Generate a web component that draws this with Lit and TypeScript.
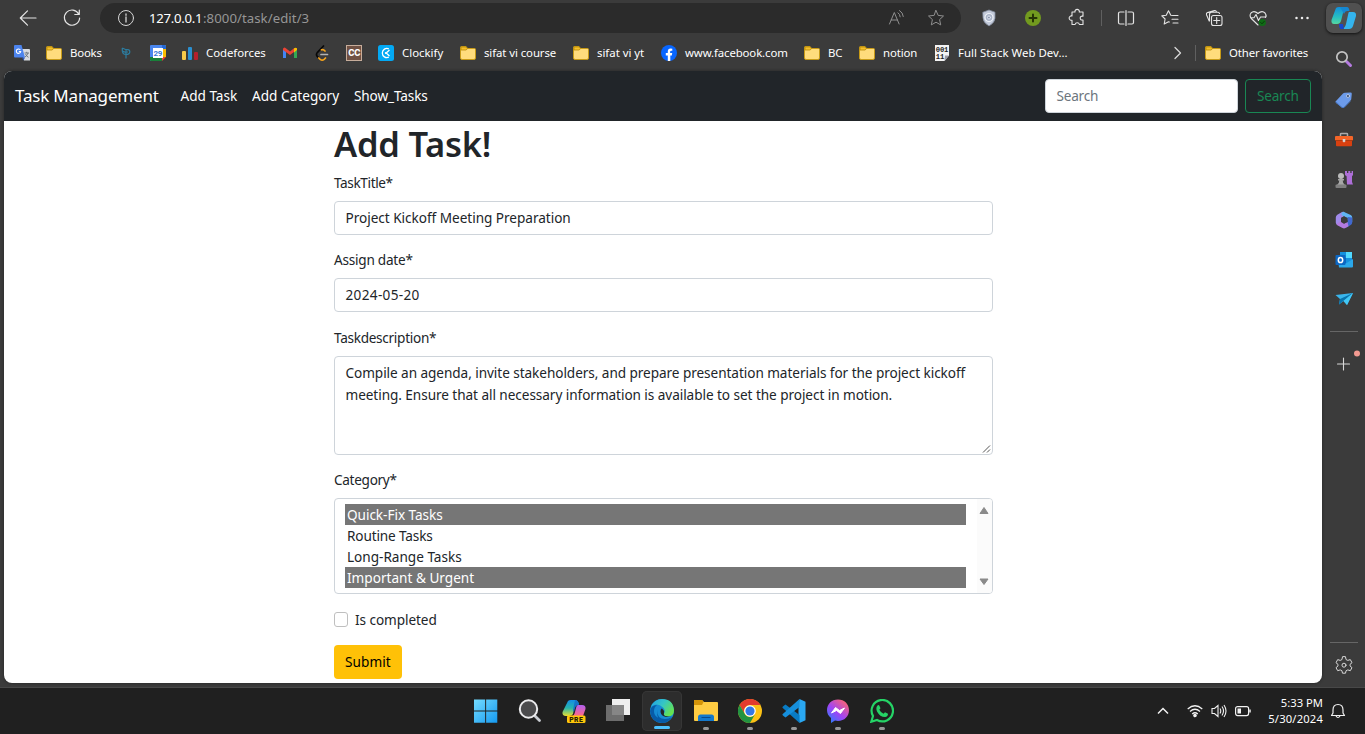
import { LitElement, html, svg, css, nothing } from "lit";
import { customElement, property } from "lit/decorators.js";

/** A single line of text whose tracking is adjusted so it spans `w` pixels. */
@customElement("fit-text")
class FitText extends LitElement {
  @property({ type: Number }) w = 0;
  @property() text = "";
  static styles = css`
    :host { display: inline-block; white-space: pre; }
    .run { display: inline-block; white-space: pre; }
  `;
  render() {
    return html`<span class="run">${this.text}</span>`;
  }
  firstUpdated() {
    const run = this.renderRoot.querySelector(".run") as HTMLElement;
    const natural = run.getBoundingClientRect().width;
    run.style.letterSpacing = `${(this.w - 0.8 - natural) / this.text.length}px`;
    this.style.width = `${this.w}px`;
  }
}

const t = (text: string, w: number) => html`<fit-text .text=${text} .w=${w}></fit-text>`;

const folder = svg`<path d="M.5 2.5a1 1 0 0 1 1-1H6l1.6 2H14.500a1 1 0 0 1 1 1V13a1.500 1.500 0 0 1-1.500 1.500H2A1.500 1.500 0 0 1 .5 13z" fill="#ffdc7c" stroke="#c79a16"/><path d="M1 5V2h5l1.500 1.800L6 5z" fill="#f5c02c" stroke="#b98a08" stroke-width=".8"/>`;

/* 16px bookmark glyphs */
const marks: Record<string, unknown> = {
  folder,
  translate: svg`<path d="M7 4h8a1 1 0 0 1 1 1v10.500h-6z" fill="#d7dbe0"/><path d="M1 0h6.500l3.500 12.500H1a1 1 0 0 1-1-1V1a1 1 0 0 1 1-1z" fill="#4c84ee"/><path d="M8 12.500h3L9.500 15.500z" fill="#2e59b8"/><path d="M6.400 5A2.200 2.200 0 1 0 6.700 6.500H4.800" fill="none" stroke="#fff" stroke-width="1.100"/><path d="M10.500 8h4.500M12.700 6.800V8M14 8q-1 3-3 4M11.500 9q1 2.500 3 3.300" stroke="#68737c" stroke-width=".9" fill="none"/>`,
  pin: svg`<g fill="none" stroke="#2c7da0" stroke-width="1.200"><path d="M4.300 3 8 4.700q3.800-.7 3.800 2T8 9.500V13.500M4.300 3v3L8 7.500M4.500 6q0 3.500 3.500 3.500M8 4.700v5M8 7h2"/></g>`,
  calendar: svg`<path d="M0 1a1 1 0 0 1 1-1h11v4H4v12H1a1 1 0 0 1-1-1z" fill="#4a86ee"/><path d="M12 0h3a1 1 0 0 1 1 1v11h-4z" fill="#fbbc04"/><path d="M12 0h3a1 1 0 0 1 1 1v3h-4z" fill="#2368d6"/><path d="M0 12h12v4H1a1 1 0 0 1-1-1z" fill="#188038"/><path d="M12 12h4l-4 4z" fill="#ea4335"/><path d="M3 3h10v10H3z" fill="#fff"/><text x="7.800" y="11" text-anchor="middle" font-size="8" font-weight="700" fill="#3b78d8" font-family="Roboto, sans-serif" letter-spacing="-.3">29</text>`,
  bars: svg`<rect x="0" y="6" width="4" height="9" rx="1" fill="#f7c948"/><rect x="6" y="2" width="4" height="13" rx="1" fill="#2a8fd0"/><rect x="12" y="7" width="4" height="8" rx="1" fill="#b51f2c"/>`,
  gmail: svg`<path d="M1 4v9h3V6z" fill="#4285f4"/><path d="M12 6v7h3V4z" fill="#34a853"/><path d="M1 4a1.500 1.500 0 0 1 2.500-1L8 6.500 12 3.300V7L8 10 1 5z" fill="#ea4335"/><path d="M12 3.300q1.500-1.300 3 0V5l-3 2.500z" fill="#fbbc04"/>`,
  leet: svg`<g fill="none" stroke-linecap="round" stroke-width="1.700"><path d="M9.500 1 3.500 7.300q-2 2.200 0 4.400l1 1" stroke="#080808"/><path d="m4.800 13 1.400 1.400q2 1.400 4 0l1.300-1.400M7.500 4.800q2-.6 3.500 1.200" stroke="#f5a31b"/><path d="M7 9.500h6.500" stroke="#b3b3b3"/></g>`,
  cc: svg`<rect x=".5" y=".5" width="15" height="15" fill="#705143" stroke="#c7ad9b"/><text x="8.200" y="11" text-anchor="middle" font-size="8.500" font-weight="800" fill="#fff" font-family="Inter, sans-serif" letter-spacing="-.4">CC</text>`,
  clock: svg`<rect width="16" height="16" rx="2.500" fill="#03a9f4"/><path d="M10.800 3.800A4.600 4.600 0 1 0 10.800 12.200M11.500 5 8.200 8l3.300 3" fill="none" stroke="#fff" stroke-width="1.300"/><circle cx="7.800" cy="8" r="1" fill="#fff"/>`,
  facebook: svg`<circle cx="8" cy="8" r="8" fill="#0866ff"/><path d="M6.800 16V10.500H4.800V8h2V6.500q0-3 2.800-3 1 0 1.700.2v2.100h-1.200q-1 0-1 1.100V8h2.100l-.4 2.500H9.300V16z" fill="#fff"/>`,
  binary: svg`<path d="M1 0h14v10.500L10.500 16H1z" fill="#f3f3f3"/><path d="M15 10.500h-4l-.5 5.500z" fill="#9c9ca6"/><g fill="#222" font-family="Liberation Mono, monospace" font-size="7.200" font-weight="700"><text x="1.800" y="6.800" letter-spacing="-.2">001</text><text x="1.800" y="13.800" letter-spacing="-.2">11</text></g>`,
};

interface Mark { icon: string; label?: string; tw?: number; w: number }
const bookmarks: Mark[] = [
  { icon: "translate", w: 32 },
  { icon: "folder", label: "Books", tw: 32.5, w: 72 },
  { icon: "pin", w: 32 },
  { icon: "calendar", w: 32 },
  { icon: "bars", label: "Codeforces", tw: 60.5, w: 100 },
  { icon: "gmail", w: 32 },
  { icon: "leet", w: 32 },
  { icon: "cc", w: 32 },
  { icon: "clock", label: "Clockify", tw: 42, w: 82 },
  { icon: "folder", label: "sifat vi course", tw: 73, w: 113 },
  { icon: "folder", label: "sifat vi yt", tw: 48, w: 88 },
  { icon: "facebook", label: "www.facebook.com", tw: 103.5, w: 143 },
  { icon: "folder", label: "BC", tw: 15, w: 55 },
  { icon: "folder", label: "notion", tw: 35, w: 75 },
  { icon: "binary", label: "Full Stack Web Dev...", tw: 110.5, w: 140.5 },
];

/* 20px toolbar glyphs drawn around their centre */
const tools: Record<string, unknown> = {
  back: svg`<path d="M18 10H2.500M9.500 2.800 2.300 10l7.200 7.200" stroke="#e4e4e4" stroke-width="1.200"/>`,
  reload: svg`<path d="M16.800 6.200A7.600 7.600 0 1 0 17.600 10M17.300 2v4.500h-4.500" stroke="#e4e4e4" stroke-width="1.200"/>`,
  info: svg`<circle cx="10" cy="10" r="7.500" stroke="#d6d6d6"/><path d="M10 8.800V14M10 6v1.300" stroke="#d6d6d6" stroke-width="1.300"/>`,
  read: svg`<path d="M3.500 16 8.300 4.500 13.100 16M5.200 12h6.200M12 4.800q2 1.300 2.200 4M13.500 2.500q3.500 2 3.800 6" stroke="#8f8f8f"/>`,
  star: svg`<path d="m10 2.500 2.200 4.900 5.300.6-3.900 3.600 1.100 5.300L10 14.200l-4.700 2.700 1.100-5.300L2.500 8l5.300-.6z" stroke="#8f8f8f"/>`,
  shield: svg`<path d="M4 4.200 10 2l6 2.200v6Q16 14.500 10 18 4 14.500 4 10.200z" fill="#c3cada" stroke="#828b9d" stroke-width=".8"/><circle cx="10" cy="9.500" r="4" fill="#a9b3c8" stroke="#eef2f8" stroke-width="1.200"/><circle cx="10" cy="9.500" r="1.500" stroke="#dfe5ef" fill="#8793ad"/>`,
  add: svg`<circle cx="10" cy="10" r="8" fill="#729a1f"/><path d="M10 6.500v7M6.500 10h7" stroke="#263305" stroke-width="2"/>`,
  puzzle: svg`<path d="M5 4h3a2.200 2.200 0 1 1 4.300 0h3.700v4.200q-2.800-.4-2.800 1.900t2.800 1.900V16.500h-3.600a2.200 2.200 0 0 0-4.300 0H5V12.200a2.200 2.200 0 1 1 0-4.200z" stroke="#e4e4e4" stroke-width="1.100"/>`,
  split: svg`<path d="M8 4H4a1.500 1.500 0 0 0-1.500 1.500v9A1.500 1.500 0 0 0 4 16h4M12 4h4a1.500 1.500 0 0 1 1.500 1.500v9A1.500 1.500 0 0 1 16 16h-4M10 2.500v15" stroke="#e4e4e4" stroke-width="1.200"/>`,
  favs: svg`<path d="M13 7.500 10.800 7.200 8.500 2.700 6.200 7.300l-4.400.6 3.300 3.100-.9 5 4.300-2.300.8.400M13.500 7.500H18M12 11.200h6M13 15h5" stroke="#e4e4e4" stroke-width="1.100"/>`,
  collect: svg`<rect x="7.500" y="7.500" width="10.500" height="10" rx="2" stroke="#e4e4e4" stroke-width="1.100"/><path d="M12.700 9.500v6M9.700 12.500h6M5.200 13 2.500 6.800q-.5-1.700 1-2.200l7-2q1.500-.3 2 1.200M15.500 5.500q-.3-1.200-1.500-1.200H7.500Q5.500 4.300 5.500 6.500v6.500" stroke="#e4e4e4" stroke-width="1.100"/>`,
  heart: svg`<path d="M10 17 3.300 10.500Q1 7.500 3 5q3-3 7 .5 4-3.500 7-.5 2 2.500.5 4.500M2.500 9.800H6L8 6.500l2.500 6L12.500 9h4.300" stroke="#e4e4e4" stroke-width="1.100"/><circle cx="14.300" cy="14.500" r="3.600" fill="#0f6b15"/><path d="m12.700 14.500 1.300 1.300 2.200-2.400" stroke="#073a09"/>`,
  dots: svg`<g fill="#ededed"><circle cx="4.500" cy="10" r="1.250"/><circle cx="10" cy="10" r="1.250"/><circle cx="15.500" cy="10" r="1.250"/></g>`,
};

/* 20px sidebar glyphs */
const side: Record<string, unknown> = {
  search: svg`<path d="m12.500 12.500 4 4" stroke="#b57be0" stroke-width="3" stroke-linecap="round"/><circle cx="8" cy="8" r="5.200" stroke="#c4c4c4" stroke-width="1.700"/>`,
  tag: svg`<path d="m2 11 7-7.500q.7-.7 2-.8l5.500-.2q1.300 0 1.300 1.300l-.5 5q0 1-.8 1.700L10 17.500q-1 .8-2 0L2 13q-1-1 0-2z" fill="#6c9bea"/><path d="m2 12 6 5.500 2 0 6-6" stroke="#4678c8"/><circle cx="14" cy="6" r="1.500" fill="#263c61" stroke="#d8e2f5" stroke-width=".7"/>`,
  tools: svg`<path d="M6.500 6V4.200q0-.7.8-.7h5.400q.8 0 .8.700V6" stroke="#aaa" stroke-width="1.500"/><path d="M2 6h16q1 0 1 1v3H1V7q0-1 1-1z" fill="#f46528"/><path d="M2 10.500h16V15.500q0 .8-1 .8H3q-1 0-1-.8z" fill="#d84010"/><path d="M1.500 10.500h17" stroke="#b53a0e" stroke-width=".8"/><path d="M8.700 9h2.600v2.500l-1.300 1-1.300-1z" fill="#d5d5d5"/>`,
  chess: svg`<path d="M11 1h2v2h1.300V1h2v2h1.300V1h1.400v4L18 6.300V12l1 2.500H13L12.600 6.300 11 5z" fill="#ae6fd8"/><circle cx="7" cy="6" r="3" fill="#bbb"/><path d="M4 9h6v1.500H8.700q0 3 2.300 4.500H3q2.300-1.500 2.300-4.500H4z" fill="#a7a7a7"/><rect x="1.500" y="14.500" width="11" height="3.500" rx="1" fill="#7f7f7f"/>`,
  office: svg`<path d="M8 2 3.300 4.700Q1.800 5.600 1.800 7.500v5.300Q2 14.300 3.300 15L7 13V8l6-3.300-3.500-3Q8.700 1.600 8 2z" fill="#a08aea"/><path d="M9.500 1.700 16.700 5Q18.200 5.900 18.200 7.500V12l-4.700-2V8.200L7.500 5V3z" fill="#5fb4f4"/><path d="M18.200 7.500v5q0 1.600-1.500 2.500L12.500 17.500 10 14l3.500-2V7z" fill="#4168cf"/><path d="m2.500 14 4.500-3 3 2.500 3.500-1.500 1 4.200-3 1.800q-1.500.9-3 0L3.300 15.200z" fill="#b27be0"/><path d="m7 8 3-1.800L13.500 8v4L10 13.700 7 12z" fill="#3b3b3b"/>`,
  outlook: svg`<path d="M6 2h12v13H6z" fill="#1490df"/><path d="M12 2h6v6h-6z" fill="#50d9ff"/><path d="M6 8h6v5H6z" fill="#0a67b9"/><path d="m4 10 7 4 8-5v7.500q0 1-1 1H5z" fill="#2ba8eb"/><rect x="1.500" y="5" width="10" height="10" rx="1" fill="#0c67c3"/><ellipse cx="6.500" cy="10" rx="2.200" ry="2.600" stroke="#fff" stroke-width="1.500"/>`,
  plane: svg`<path d="m1.500 6 17.500-2-6 12-3.500-4L5 15.500 6 10z" fill="#39b5ec"/><path d="m6 10 13-6L5 15.500z" fill="#0874ad"/><path d="M19 4 9.500 12l3.500 4z" fill="#42c8f5"/>`,
};
const sideOrder: [string, number][] = [["search", 41], ["tag", 40], ["tools", 40], ["chess", 40], ["office", 40], ["outlook", 40], ["plane", 39]];

/* 24px taskbar glyphs */
const apps: [string, unknown][] = [
  ["", svg`<g fill="url(#win)"><path d="M0 0h11.500v11.500H0zM12.500 0H24v11.500H12.500zM0 12.500h11.500V24H0zM12.500 12.500H24V24H12.500z" transform="translate(0 .4) scale(.97)"/></g>`],
  ["", svg`<path d="m17 17 4.500 4.500" stroke="#c9ccd2" stroke-width="2.800" stroke-linecap="round"/><circle cx="10.500" cy="10" r="8.700" fill="#4b4b4d" stroke="#ebebed" stroke-width="2"/>`],
  ["", svg`<path d="M6 2q1-1 3-1h4q3 0 4 4l-2 1q-2 0-3 4l-1 5q-1 2-4 2H4q-4 0-3.500-4z" fill="url(#cop)"/><path d="M13 1q3 0 4 5-3 0-4 3l-1 4-1-2z" fill="#1673ca"/><path d="M16 6h4q4 0 3.500 4L21 17H10q2 0 3-4l1-4q.5-3 2-3z" fill="url(#pink)"/><rect x="5" y="16.500" width="18.500" height="7.500" rx="1.500" fill="#ffc60a"/><text x="14.200" y="22.700" text-anchor="middle" font-family="Roboto, sans-serif" font-weight="900" font-size="6.800" letter-spacing=".4" fill="#241c02">PRE</text>`],
  ["", svg`<rect x="6" y="0" width="18" height="16" fill="#eee"/><rect x="0" y="6" width="18" height="16" fill="#777" fill-opacity=".88"/>`],
  ["active", svg`<circle cx="12" cy="12" r="12" fill="#168bd3"/><path d="M1 8Q4 0 12 0q11 0 12 11 0 7-7 6.500-4 0-3-3 2-3-1-6Q7 3 1 8z" fill="url(#edge)"/><path d="M7 11q0 9 8 9 4 0 7-2-4 6-10 6Q1 23 0 12 1 6 7 6q-3 2-3 6t3 6 8 6Q6 22 7 11z" fill="#075ba8"/><path d="M12 9.500q-1.500 0-1.500 3.500.5 4 5.500 5 3 0 6-1-2 .7-5 .3-4-.5-3-3 .5-3-2-4.800z" fill="#24272a"/>`],
  ["run", svg`<path d="M0 2q0-1 1-1h7l2 2h13q1 0 1 1v17q0 1-1 1H1q-1 0-1-1z" fill="#ffcc42"/><path d="M0 6V2q0-1 1-1h7l1.500 2L8 6z" fill="#d59408"/><path d="M4 22v-4q0-2.500 2.500-2.500h11Q20 15.500 20 18v4z" fill="#1479cc"/><path d="M7.500 18.500h9" stroke="#0a4b8c"/>`],
  ["run", svg`<circle cx="12" cy="12" r="12" fill="#fbc116"/><path d="M1.600 6A12 12 0 0 1 22.400 6H12a6 6 0 0 0-5.200 9z" fill="#e33b2e"/><path d="M1.600 6A12 12 0 0 0 12 24l5.200-9a6 6 0 0 1-10.400 0z" fill="#229342"/><circle cx="12" cy="12" r="5.800" fill="#fff"/><circle cx="12" cy="12" r="4.600" fill="#3277e8"/>`],
  ["run", svg`<path d="m17.500 0 6 2.700v18.600l-6 2.700-1-5V5z" fill="#2aa8f2"/><path d="m1.500 7 2-1.500L17.500 16v8L.5 8.800Q0 8 1.500 7z" fill="#087bc4"/><path d="m1.500 17 2 1.500L17.500 8V0L.5 15.200Q0 16 1.500 17z" fill="#168fdc"/>`],
  ["run", svg`<path d="M12 0.500c-6.500 0-11 4.700-11 10.500 0 3.200 1.300 6 4 8V24l4-2.500q1.500.4 3 .4c6.500 0 11-4.700 11-10.700S18.500.5 12 .5z" fill="url(#mess)"/><path d="m5.500 14 4-5.500 4 3L18.500 9l-4 5.500-4-3z" fill="#fff" stroke="#fff" stroke-linejoin="round"/>`],
  ["run", svg`<path d="M1.300 22.700 3 17A10.700 10.700 0 1 1 7 21z" stroke="#25d366" stroke-width="2.200" fill="none"/><path d="M7.500 6.500Q9 5.500 9.500 7l1 2.200-1.200 1.500q1.500 3 4.300 4l1.400-1.500 3 1.500q0 3-3 3.300Q10 18 7 12.500 5.500 8.500 7.500 6.500z" fill="#25d366"/>`],
];

@customElement("app-root")
class AppRoot extends LitElement {
  static styles = css`
    :host { display: block; width: 1365px; height: 734px; overflow: hidden; font-family: "Noto Sans", "Open Sans", sans-serif; background: #3b3b3b; color: #fff; }
    * { box-sizing: border-box; }
    svg { display: block; flex: none; }
    .line { fill: none; stroke-linecap: round; stroke-linejoin: round; }
    .browser { display: grid; grid-template-columns: 1322px 43px; height: 687px; }
    .toolbar { display: flex; align-items: center; height: 36px; padding-left: 18px; }
    .reload { margin-left: 24px; }
    .address { display: flex; align-items: center; width: 861px; height: 30px; margin-left: 18px; padding: 0 15px 0 16px; border-radius: 15px; background: #2b2b2b; font-size: 13.200px; }
    .host { margin-left: 13px; }
    .path { color: #969696; flex: 1; }
    .star { margin-left: 20px; }
    .extensions { display: flex; align-items: center; margin-left: 18px; gap: 24px; }
    .rule { width: 1px; height: 16px; background: #606060; }
    .extensions .rule { margin: 0 -10.500px 0 -10px; }
    .bookmarks { display: flex; align-items: center; height: 35px; padding: 0 0 1px 14px; font-size: 11.400px; }
    .mark { display: flex; align-items: center; gap: 8px; flex: none; }
    .mark fit-text { margin-top: -1px; }
    .chevron { margin: 0 12px 0 96.500px; }
    .other { margin-left: 9px; }
    .page { margin-left: 4px; height: 612px; border-radius: 8px; background: #fff; overflow: hidden; color: #212529; font-size: 13.600px; box-shadow: 0 0 3px #222; }
    .navbar { display: flex; align-items: center; height: 50px; padding-left: 11px; background: #212529; color: #fff; }
    .brand { font-size: 17px; margin: -1px 21px 0 0; }
    .links { display: flex; gap: 14px; flex: 1; margin-top: -2px; }
    .query { width: 193px; height: 34px; border: 1px solid #ced4da; border-radius: 4px; background: #fff; color: #6c757d; padding: 0 10.500px; line-height: 32px; }
    .find { width: 66px; height: 34px; margin: 0 11px 0 7px; border: 1px solid #198754; border-radius: 4px; color: #198754; padding-left: 11px; line-height: 32px; }
    .form { width: 659px; margin-left: 330px; }
    h1 { margin: 0 0 7px; height: 45px; line-height: 46px; font-size: 34.500px; font-weight: 560; }
    .label { height: 20px; line-height: 19px; margin-bottom: 8px; }
    .box { height: 34px; border: 1px solid #ced4da; border-radius: 4px; padding-left: 10.500px; line-height: 32px; }
    .first { margin-bottom: 15px; }
    .second { margin-bottom: 16px; }
    .area { display: grid; grid-template-columns: 1fr 12px; height: 99px; padding-top: 5px; line-height: 22px; margin-bottom: 15px; }
    .grip { align-self: end; }
    .select { display: grid; grid-template-columns: 621px 15px; justify-content: space-between; height: 96px; padding: 0 0 0 10px; margin-bottom: 16px; }
    .options { padding-top: 5px; }
    .option { height: 21px; line-height: 21px; padding-left: 2px; }
    .picked { background: #767676; color: #fff; }
    .scroll { display: flex; flex-direction: column; justify-content: space-between; padding: 7px 3px 7px 2px; background: #fbfbfb; border-radius: 0 3px 3px 0; }
    .check { display: flex; align-items: center; gap: 7px; height: 20px; margin-bottom: 15px; line-height: 20px; }
    .tick { width: 14px; height: 15px; border: 1px solid #bfbfbf; border-radius: 3px; margin-top: -1px; }
    .submit { width: 68px; height: 34px; border-radius: 4px; background: #ffc107; color: #000; padding-left: 11px; line-height: 33px; }
    .sidebar { display: flex; flex-direction: column; align-items: center; }
    .copilot { display: grid; place-items: center; width: 36px; height: 30px; margin: 3px 0 11px 1px; border-radius: 7px; background: #505050; box-shadow: 0 1px 3px #111; flex: none; }
    .slot { display: grid; place-items: center; flex: none; }
    .lead { margin-bottom: 5.500px; }
    .divider { width: 28px; height: 1px; background: #666; flex: none; }
    .upper { margin-top: 12.500px; }
    .low { margin-top: auto; }
    .more { margin: 18px 0 0; }
    .gear { margin: 12px 0; }
    .taskbar { display: flex; height: 47px; border-top: 1px solid #484848; background: #202020; padding-left: 466px; color: #fff; }
    .app { display: flex; flex-direction: column; align-items: center; width: 40px; height: 40px; margin: 3px 4px 0 0; padding-top: 8px; border-radius: 5px; }
    .active { background: #2d2d2d; box-shadow: inset 0 0 0 1px #363636; }
    .bar { width: 16px; height: 3px; border-radius: 2px; background: #4cc2ff; margin-top: 3px; }
    .dot { width: 6px; height: 3px; border-radius: 2px; background: #979797; margin-top: 4px; }
    .tray { display: flex; align-items: center; margin-left: 251px; }
    .tray svg { margin-right: 8px; }
    .tray .up { margin-right: 18px; }
    .tray .battery { margin-right: 0; }
    .clock { width: 72px; text-align: right; font-size: 11.200px; line-height: 16px; height: 33px; margin-right: 7px; }
  `;

  private tool(name: string, cls = "") {
    return html`<svg class="line ${cls}" width="20" height="20" viewBox="0 0 20 20">${tools[name]}</svg>`;
  }

  private mark(m: Mark) {
    return html`<div class="mark" style="width:${m.w}px">
      <svg width="16" height="16" viewBox="0 0 16 16">${marks[m.icon]}</svg>
      ${m.label ? t(m.label, m.tw!) : nothing}
    </div>`;
  }

  private chrome() {
    return html`
      <div class="toolbar">
        ${this.tool("back")} ${this.tool("reload", "reload")}
        <div class="address">
          ${this.tool("info")}
          <span class="host">${t("127.0.0.1", 54)}</span>
          <span class="path">${t(":8000/task/edit/3", 107)}</span>
          ${this.tool("read")} ${this.tool("star", "star")}
        </div>
        <div class="extensions">
          ${this.tool("shield")}${this.tool("add")}${this.tool("puzzle")}
          <div class="rule"></div>
          ${["split", "favs", "collect", "heart", "dots"].map((n) => this.tool(n))}
        </div>
      </div>
      <div class="bookmarks">
        ${bookmarks.map((m) => this.mark(m))}
        <svg class="chevron line" width="12" height="14" viewBox="0 0 12 14"><path d="m4 1.500 5.500 5.500L4 12.500" stroke="#d8d8d8" stroke-width="1.300"/></svg>
        <div class="rule"></div>
        <div class="mark other"><svg width="16" height="16" viewBox="0 0 16 16">${folder}</svg>${t("Other favorites", 80)}</div>
      </div>`;
  }

  private page() {
    return html`<div class="page">
      <div class="navbar">
        <div class="brand">${t("Task Management", 144.5)}</div>
        <div class="links">${t("Add Task", 57.5)}${t("Add Category", 88)}${t("Show_Tasks", 74.5)}</div>
        <div class="query">${t("Search", 42.5)}</div>
        <div class="find">${t("Search", 42.5)}</div>
      </div>
      <div class="form">
        <h1>${t("Add Task!", 158)}</h1>
        <div class="label">${t("TaskTitle*", 59.5)}</div>
        <div class="box first">${t("Project Kickoff Meeting Preparation", 226)}</div>
        <div class="label">${t("Assign date*", 79.5)}</div>
        <div class="box second">${t("2024-05-20", 75)}</div>
        <div class="label">${t("Taskdescription*", 103)}</div>
        <div class="box area">
          <div>
            <div>${t("Compile an agenda, invite stakeholders, and prepare presentation materials for the project kickoff", 620.5)}</div>
            <div>${t("meeting. Ensure that all necessary information is available to set the project in motion.", 547.5)}</div>
          </div>
          <svg class="grip" width="12" height="12" viewBox="0 0 12 12"><path d="m3 10.500 7-7M7 10.500l3-3" stroke="#555"/></svg>
        </div>
        <div class="label">${t("Category*", 63.5)}</div>
        <div class="box select">
          <div class="options">
            <div class="option picked">${t("Quick-Fix Tasks", 96.5)}</div>
            <div class="option">${t("Routine Tasks", 86.5)}</div>
            <div class="option">${t("Long-Range Tasks", 115.5)}</div>
            <div class="option picked">${t("Important & Urgent", 128)}</div>
          </div>
          <div class="scroll">
            <svg width="10" height="9" viewBox="0 0 10 9"><path d="M5 1.500 9 7.500H1z" fill="#8a8a8a" stroke="#8a8a8a" stroke-linejoin="round"/></svg>
            <svg width="10" height="9" viewBox="0 0 10 9"><path d="M1 2h8L5 7.500z" fill="#8a8a8a" stroke="#8a8a8a" stroke-linejoin="round"/></svg>
          </div>
        </div>
        <div class="check"><div class="tick"></div>${t("Is completed", 82.5)}</div>
        <div class="submit">${t("Submit", 46.5)}</div>
      </div>
    </div>`;
  }

  private sidebar() {
    return html`<div class="sidebar">
      <div class="copilot"><svg width="26" height="24" viewBox="0 0 26 24"><path d="M5 2q1-1 3-1h8q-3 1-4 6l-2 8q-1 3-4 3H3q-3 0-2.500-4z" fill="url(#cop2)"/><path d="M9 1h7q2 0 2.500 4H16q-2 0-3 3z" fill="#1687d1"/><path d="M18 6h4q3.500 0 3 4l-3 10q-1 3-4 3h-7q3-1 4-5l2-9q.5-3 1-3z" fill="#34b4ed"/><path d="M8 18h4l1 5h-3q-2 0-2-5z" fill="#1647cd"/></svg></div>
      ${sideOrder.map(([n, h], i) => html`<div class="slot ${i === 0 ? "lead" : ""}" style="height:${i === 0 ? 30 : h}px"><svg class="line" width="20" height="20" viewBox="0 0 20 20">${side[n]}</svg></div>`)}
      <div class="divider upper"></div>
      <svg class="more line" width="42" height="26" viewBox="0 0 42 26"><path d="M20.500 8v12M14.500 14h12" stroke="#d8d8d8" stroke-width="1.100"/><circle cx="34" cy="3.500" r="3" fill="#f39a91"/></svg>
      <div class="divider low"></div>
      <svg class="gear line" width="20" height="20" viewBox="0 0 20 20"><path d="m8.500 2-.6 2.600-1.700.8-2.500-.8L2 7.700l2 1.700v1.500l-2 1.800 1.700 3 2.500-.8 1.700.8.600 2.500h3l.6-2.500 1.700-.8 2.500.8 1.700-3-2-1.800V9.400l2-1.700-1.700-3.100-2.500.8-1.700-.8L11.500 2z" stroke="#d8d8d8"/><circle cx="10" cy="10.200" r="2" stroke="#d8d8d8"/></svg>
    </div>`;
  }

  private taskbar() {
    return html`<div class="taskbar">
      ${apps.map(([state, glyph]) => html`<div class="app ${state === "active" ? "active" : ""}">
        <svg width="24" height="24" viewBox="0 0 24 24" fill="none">
          <defs>
            <linearGradient id="win" x1="0" y1="0" x2="1" y2="1"><stop stop-color="#75dcff"/><stop offset="1" stop-color="#1499f0"/></linearGradient>
            <linearGradient id="cop" x1="0" y1="0" x2="0" y2="1"><stop stop-color="#158de6"/><stop offset=".5" stop-color="#27b4ac"/><stop offset="1" stop-color="#e8df31"/></linearGradient>
            <linearGradient id="pink" x1="0" y1="0" x2="0" y2="1"><stop stop-color="#b15ff0"/><stop offset="1" stop-color="#ff6885"/></linearGradient>
            <linearGradient id="edge" x1="0" y1="0" x2="1" y2=".6"><stop stop-color="#1fa1e8"/><stop offset=".5" stop-color="#35c5c5"/><stop offset="1" stop-color="#66e34e"/></linearGradient>
            <linearGradient id="mess" x1="0" y1="1" x2=".8" y2="0"><stop stop-color="#1688ff"/><stop offset=".5" stop-color="#a044f5"/><stop offset="1" stop-color="#ff6570"/></linearGradient>
          </defs>${glyph}</svg>
        ${state === "active" ? html`<div class="bar"></div>` : state ? html`<div class="dot"></div>` : nothing}
      </div>`)}
      <div class="tray">
        <svg class="up" width="12" height="14" viewBox="0 0 12 14" fill="none"><path d="m1 9.500 5-5 5 5" stroke="#f1f1f1" stroke-width="1.500"/></svg>
        <svg width="16" height="16" viewBox="0 0 16 16" fill="none" stroke="#f1f1f1" stroke-width="1.200"><path d="M.7 6q7.300-6.500 14.600 0M3 8.500q5-4.500 10 0M5.200 11q2.800-2.500 5.600 0"/><circle cx="8" cy="12.500" r="1.200" fill="#f1f1f1"/></svg>
        <svg width="16" height="16" viewBox="0 0 16 16" fill="none" stroke="#f1f1f1" stroke-width="1.100"><path d="M1 5.500h2.500L7 2.500v11l-3.500-3H1zM9 5.500q1.500 2.500 0 5M11 3.500q3 4.500 0 9M13 2q4 6 0 12"/></svg>
        <svg class="battery" width="16" height="16" viewBox="0 0 16 16" fill="none"><rect x=".6" y="3.600" width="13" height="9" rx="2" stroke="#f1f1f1" stroke-width="1.200"/><path d="M2.500 5.500H6v5H2.500z" fill="#f1f1f1"/><path d="M15 6.500v3" stroke="#f1f1f1" stroke-width="1.500"/></svg>
        <div class="clock"><div>${t("5:33 PM", 43)}</div><div>${t("5/30/2024", 55.5)}</div></div>
        <svg width="16" height="16" viewBox="0 0 16 16" fill="none"><path d="M3 7q0-5.500 5-5.500T13 7v3l1.500 2.500h-13L3 10zM6 13q2 3 4 0" stroke="#f1f1f1" stroke-width="1.200" stroke-linejoin="round"/></svg>
      </div>
    </div>`;
  }

  render() {
    return html`
      <svg width="0" height="0"><defs><linearGradient id="cop2" x1="0" y1="0" x2="0" y2="1"><stop stop-color="#118fdd"/><stop offset=".6" stop-color="#28bfc0"/><stop offset="1" stop-color="#56d7a0"/></linearGradient></defs></svg>
      <div class="browser"><div>${this.chrome()}${this.page()}</div>${this.sidebar()}</div>
      ${this.taskbar()}`;
  }
}
